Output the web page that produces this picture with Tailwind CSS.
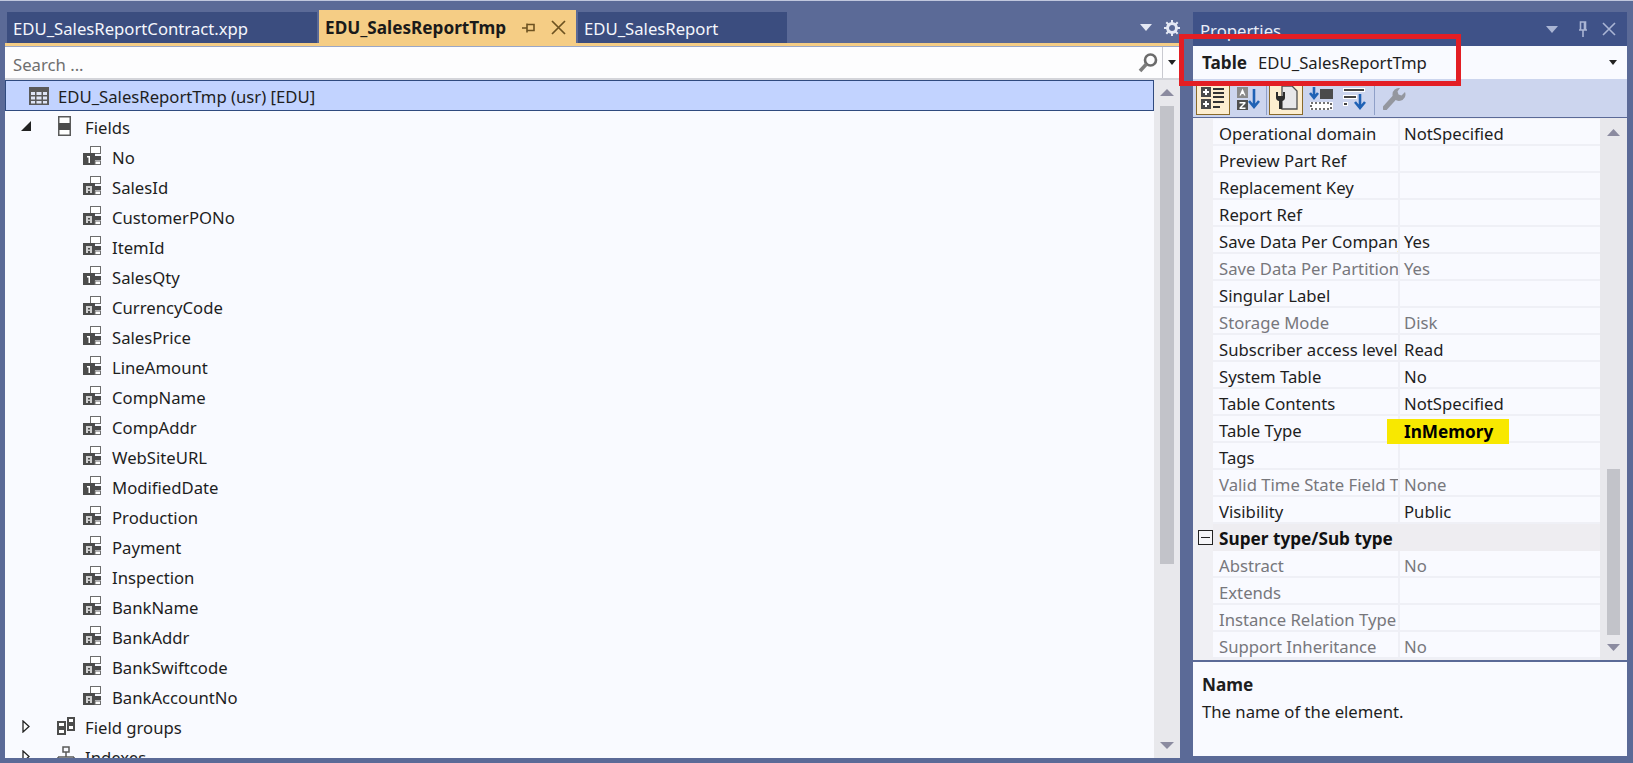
<!DOCTYPE html>
<html lang="en">

<head>
    <meta charset="UTF-8">
    <title>EDU_SalesReportTmp</title>
    <script src="https://cdn.jsdelivr.net/npm/@tailwindcss/browser@4"></script>
</head>

<body class="bg-[#5b6a97] h-[763px] w-[1633px] overflow-hidden relative font-['Noto_Sans',sans-serif] text-[16.7px] text-[#1e1e1e]">
    <svg class="hidden">
        <symbol id="field" viewBox="0 0 18 20">
            <rect x="7.5" y="0.5" width="10" height="7" fill="#fff" stroke="#6d6d6d" />
            <rect x="0" y="7" width="12" height="12" fill="#4c4c4c" />
            <rect x="12" y="10" width="6" height="4" fill="#4c4c4c" />
            <rect x="12" y="15" width="5.5" height="3.5" fill="#fff" stroke="#6d6d6d" />
            <rect x="3" y="10" width="6" height="7" fill="#fff" opacity=".75" />
            <rect x="5" y="12" width="2" height="1.5" fill="#4c4c4c" />
            <rect x="5" y="15" width="2" height="2" fill="#4c4c4c" />
        </symbol>
        <symbol id="fieldnum" viewBox="0 0 18 20">
            <rect x="7.5" y="0.5" width="10" height="7" fill="#fff" stroke="#6d6d6d" />
            <rect x="0" y="7" width="12" height="12" fill="#4c4c4c" />
            <rect x="12" y="10" width="6" height="4" fill="#4c4c4c" />
            <rect x="12" y="15" width="5.5" height="3.5" fill="#fff" stroke="#6d6d6d" />
            <path d="M4 10h3v7H5.5v-5.5H4z" fill="#fff" />
        </symbol>
    </svg>

    <div class="flex h-[758px] pt-[9px] border-t border-[#c0c7dd]">
        <!-- left side: tabs and tree -->
        <div class="w-[1175px] ml-[5px] flex flex-col relative">
            <div class="flex items-end h-[33px] pl-[2px] gap-[2px]">
                <div class="w-[310px] h-[31px] bg-[#3b4d7f] text-[#f4f6fc] pl-[6px] pt-[2px] flex items-center">EDU_SalesReportContract.xpp</div>
                <div class="w-[257px] h-[33px] bg-[#f5cd85] pl-[6px] pt-[2px] flex items-center font-bold text-[17.2px] text-[#1a1a1a]">
                    <span class="w-[197px] whitespace-nowrap">EDU_SalesReportTmp</span>
                    <svg width="14" height="14" viewBox="0 0 14 14" fill="none" stroke="#6d5220" stroke-width="1.6">
                        <path d="M0 7h5M5 2.5v9M5 3.5h7v6H5M12 3v7" />
                    </svg>
                    <svg class="ml-[15px]" width="15" height="15" viewBox="0 0 15 15" fill="none" stroke="#6d5220" stroke-width="1.7">
                        <path d="M1 1l13 13M14 1L1 14" />
                    </svg>
                </div>
                <div class="w-[209px] h-[31px] bg-[#3b4d7f] text-[#f4f6fc] pl-[6px] pt-[2px] flex items-center">EDU_SalesReport</div>
                <div class="flex-1 flex items-center justify-end h-[31px] gap-[12px]">
                    <svg width="12" height="7" viewBox="0 0 12 7"><path d="M0 0h12L6 7z" fill="#e4e8f4" /></svg>
                    <svg width="16" height="16" viewBox="0 0 16 16">
                        <circle cx="8" cy="8" r="4.5" fill="none" stroke="#e4e8f4" stroke-width="3" />
                        <path d="M8 0v3M8 13v3M0 8h3M13 8h3M2.3 2.3l2.2 2.2M11.5 11.5l2.2 2.2M13.7 2.3l-2.2 2.2M4.5 11.5l-2.2 2.2" stroke="#e4e8f4" stroke-width="2" />
                    </svg>
                </div>
            </div>
            <div class="h-[4px] bg-[#f5cd85] border-b border-[#9aa7c8]"></div>
            <div class="h-[33px] bg-[#fdfdfe] border-b-2 border-[#d4d5da] flex items-center">
                <span class="flex-1 pl-[8px] pt-[5px] text-[#6f6f6f]">Search ...</span>
                <svg class="mr-[3px]" width="22" height="22" viewBox="0 0 22 22" fill="none">
                    <circle cx="13.5" cy="8" r="5.5" stroke="#6b6b6b" stroke-width="2.6" />
                    <path d="M9.5 12L3 19" stroke="#7d7d7d" stroke-width="3.6" />
                </svg>
                <div class="w-[18px] h-full border-l border-[#c9cad0] flex items-center justify-center">
                    <svg width="8" height="5" viewBox="0 0 8 5"><path d="M0 0h8L4 5z" fill="#222" /></svg>
                </div>
            </div>
            <div class="flex flex-1 min-h-0 bg-[#f9faff]">
                <div class="flex-1 overflow-hidden">
                    <div class="h-[31px] bg-[#c2d3ff] border border-[#2f4a7f] flex items-center pl-[23px]">
                        <svg width="20" height="18" viewBox="0 0 20 18">
                            <path d="M0 0h20v18H0z" fill="#5a5a5a" />
                            <path d="M2 5h4v3H2zM7.5 5h5v3h-5zM14 5h4v3h-4zM2 9.5h4v3H2zM7.5 9.5h5v3h-5zM14 9.5h4v3h-4zM2 14h4v2.5H2zM7.5 14h5v2.5h-5zM14 14h4v2.5h-4z" fill="#dfe5f5" />
                        </svg>
                        <span class="ml-[9px] pt-[3px]">EDU_SalesReportTmp (usr) [EDU]</span>
                    </div>
                    <div id="tree"></div>
                </div>
                <div class="w-[26px] bg-[#e8e8ec] flex flex-col items-center pt-[9px] pb-[9px]">
                    <svg width="14" height="7" viewBox="0 0 14 7"><path d="M7 0l7 7H0z" fill="#8b8ba0" /></svg>
                    <div class="w-[14px] h-[458px] mt-[10px] bg-[#c2c3c9]"></div>
                    <div class="flex-1"></div>
                    <svg width="14" height="7" viewBox="0 0 14 7"><path d="M0 0h14L7 7z" fill="#8b8ba0" /></svg>
                </div>
            </div>
        </div>

        <!-- properties panel -->
        <div class="w-[434px] ml-[13px] h-[744px] mt-[2px] flex flex-col">
            <div class="h-[34px] shrink-0 bg-[#3f5288] text-[#e9edf8] flex items-center pl-[7px] pr-[11px]">
                <span class="flex-1 pt-[4px]">Properties</span>
                <svg width="12" height="7" viewBox="0 0 12 7"><path d="M0 0h12L6 7z" fill="#aab5d4" /></svg>
                <svg class="ml-[19px]" width="12" height="16" viewBox="0 0 12 16" fill="none" stroke="#aab5d4" stroke-width="1.6">
                    <path d="M2 9h8M3.5 1h5v8h-5zM7.5 1v8M6 9v7" />
                </svg>
                <svg class="ml-[13px]" width="14" height="14" viewBox="0 0 14 14" fill="none" stroke="#aab5d4" stroke-width="1.6">
                    <path d="M1 1l12 12M13 1L1 13" />
                </svg>
            </div>
            <div class="h-[33px] shrink-0 bg-[#f9faff] flex items-center pl-[9px] pr-[10px]">
                <span class="font-bold text-[17.2px]">Table</span>
                <span class="ml-[11px] flex-1">EDU_SalesReportTmp</span>
                <svg width="8" height="5" viewBox="0 0 8 5"><path d="M0 0h8L4 5z" fill="#222" /></svg>
            </div>
            <div class="h-[38px] shrink-0 bg-[#ccd5ee] flex items-center pl-[3px]">
                <div class="w-[34px] h-[33px] bg-[#fdeed0] border border-[#8a6a2a] flex items-center justify-center">
                    <svg width="24" height="24" viewBox="0 0 24 24">
                        <path d="M0 1h10v10H0zM0 13h10v10H0z" fill="#4a4a4a" />
                        <path d="M2 5h6v2H2zM4 3h2v6H4zM2 17h6v2H2zM4 15h2v6H4z" fill="#fff" />
                        <path d="M12 2h11v2H12zM12 6h11v2H12zM12 10h11v2H12zM12 15h11v2H12zM12 20h7v2h-7z" fill="#333" />
                    </svg>
                </div>
                <svg class="ml-[5px]" width="26" height="25" viewBox="0 0 26 25">
                    <path d="M2 1h11v11H2z" fill="#8a8a8a" />
                    <path d="M7.5 2.5l3 7H9l-.5-1.5h-2L6 9.5H4.500z" fill="#fff" />
                    <path d="M2 14h11v10H2z" fill="#4f4f4f" />
                    <path d="M4.500 16h6v1.500l-4 4h4V23h-6v-1.500l4-4h-4z" fill="#fff" />
                    <path d="M19 3v17M14 15l5 6 5-6" fill="none" stroke="#1f62b5" stroke-width="2.600" />
                </svg>
                <div class="w-px h-[34px] bg-[#8fa0c8] ml-[5px]"></div>
                <div class="w-[34px] h-[33px] ml-[2px] bg-[#fdeed0] border border-[#8a6a2a] flex items-center justify-center">
                    <svg width="24" height="26" viewBox="0 0 24 26">
                        <path d="M8 1h10l5 5v18H8z" fill="#e7e7ea" stroke="#4f4f4f" stroke-width="1.300" />
                        <path d="M2 7v6c0 2 2 3 3 3v8h3v-8c1 0 3-1 3-3V7H9v4H4V7z" fill="#2d2d2d" />
                    </svg>
                </div>
                <svg class="ml-[6px]" width="24" height="25" viewBox="0 0 24 25">
                    <path d="M11 3h13v10H11z" fill="#4b4b4b" />
                    <path d="M5 1v10M1 7l4 5 4-5" fill="none" stroke="#1f62b5" stroke-width="2.600" />
                    <path d="M1 16h23v8H1z" fill="#fff" />
                    <path d="M2 17h20v6H2z" fill="none" stroke="#444" stroke-width="1.600" stroke-dasharray="2 2" />
                </svg>
                <svg class="ml-[9px]" width="26" height="25" viewBox="0 0 26 25">
                    <path d="M1 2h22v4H1zM1 9h14v4H1zM1 16h5v4H1z" fill="#fff" />
                    <path d="M2 3h20v2H2zM2 10h12v2H2zM2 17h3v2H2z" fill="#444" />
                    <path d="M18 8v14M13 16l5 6 5-6" fill="none" stroke="#1f62b5" stroke-width="2.600" />
                </svg>
                <div class="w-px h-[34px] bg-[#8fa0c8] ml-[6px]"></div>
                <svg class="ml-[8px]" width="23" height="23" viewBox="0 0 23 23" fill="none">
                    <path d="M2 21L12 10" stroke="#94979f" stroke-width="5" stroke-linecap="round" />
                    <path d="M22 5a6.500 6.500 0 1 1-5-4l-2.500 3.500 1 3 3 1z" fill="#94979f" />
                </svg>
            </div>
            <div class="flex-1 min-h-0 flex mt-[1px] bg-[#f0f0f4]">
                <div class="flex-1 min-w-0 flex flex-col">
                    <div id="grid" class="pt-[1px]"></div>
                </div>
                <div class="w-[27px] bg-[#e8e8ec] flex flex-col items-center pt-[11px] pb-[9px] relative">
                    <svg width="13" height="7" viewBox="0 0 13 7"><path d="M6.500 0L13 7H0z" fill="#8b8ba0" /></svg>
                    <div class="flex-1"></div>
                    <div class="w-[13px] h-[166px] bg-[#c2c3c9] mb-[9px]"></div>
                    <svg width="13" height="7" viewBox="0 0 13 7"><path d="M0 0h13L6.500 7z" fill="#8b8ba0" /></svg>
                </div>
            </div>
            <div class="h-[94px] shrink-0 mt-[2px] bg-[#f9faff] pl-[9px] pt-[9px] leading-[27px]">
                <div class="font-bold text-[17.2px]">Name</div>
                <div>The name of the element.</div>
            </div>
        </div>
    </div>

    <!-- red annotation box on top of the screenshot -->
    <div class="absolute left-[1179px] top-[34px] w-[282px] h-[52px] border-[5px] border-[#e31e24]"></div>

    <script>
        const fields = [
            ["No", "fieldnum"], ["SalesId", "field"], ["CustomerPONo", "field"], ["ItemId", "field"],
            ["SalesQty", "fieldnum"], ["CurrencyCode", "field"], ["SalesPrice", "fieldnum"], ["LineAmount", "fieldnum"],
            ["CompName", "field"], ["CompAddr", "field"], ["WebSiteURL", "field"], ["ModifiedDate", "fieldnum"],
            ["Production", "field"], ["Payment", "field"], ["Inspection", "field"], ["BankName", "field"],
            ["BankAddr", "field"], ["BankSwiftcode", "field"], ["BankAccountNo", "field"]
        ];

        let tree = `
            <div class="h-[30px] flex items-center pl-[16px]">
                <svg width="10" height="10" viewBox="0 0 10 10"><path d="M10 0v10H0z" fill="#222" /></svg>
                <svg class="ml-[27px]" width="13" height="20" viewBox="0 0 13 20">
                    <rect x=".75" y=".75" width="11.500" height="18.500" fill="#fff" stroke="#5a5a5a" stroke-width="1.500" />
                    <rect x="1" y="7" width="11" height="7" fill="#4c4c4c" />
                </svg>
                <span class="ml-[14px] pt-[4px]">Fields</span>
            </div>`;
        for (const [name, icon] of fields) {
            tree += `
            <div class="h-[30px] flex items-center pl-[78px]">
                <svg width="18" height="20"><use href="#${icon}" /></svg>
                <span class="ml-[11px] pt-[4px]">${name}</span>
            </div>`;
        }
        tree += `
            <div class="h-[30px] flex items-center pl-[17px]">
                <svg width="8" height="13" viewBox="0 0 8 13"><path d="M1 1l6 5.500L1 12z" fill="#fff" stroke="#222" stroke-width="1.300" /></svg>
                <svg class="ml-[27px]" width="18" height="20" viewBox="0 0 18 20">
                    <path d="M0 5h9v14H0zM10 1h8v14h-8z" fill="#4c4c4c" />
                    <path d="M2 7h5v3H2zM2 14h5v3H2zM12 3h4v3h-4zM12 10h4v3h-4z" fill="#fff" />
                </svg>
                <span class="ml-[10px] pt-[4px]">Field groups</span>
            </div>
            <div class="h-[30px] flex items-center pl-[17px]">
                <svg width="8" height="13" viewBox="0 0 8 13"><path d="M1 1l6 5.500L1 12z" fill="#fff" stroke="#222" stroke-width="1.300" /></svg>
                <svg class="ml-[27px]" width="18" height="20" viewBox="0 0 18 20" fill="none" stroke="#5a5a5a" stroke-width="1.500">
                    <path d="M6 1h6v5H6zM9 6v5M1 11h16M1 11v3M17 11v3M0 14h5v5H0zM13 14h5v5h-5z" />
                </svg>
                <span class="ml-[10px] pt-[4px]">Indexes</span>
            </div>`;
        document.getElementById("tree").innerHTML = tree;

        // label, value, disabled
        const props = [
            ["Operational domain", "NotSpecified"], ["Preview Part Ref", ""], ["Replacement Key", ""], ["Report Ref", ""],
            ["Save Data Per Company", "Yes"], ["Save Data Per Partition", "Yes", true], ["Singular Label", ""],
            ["Storage Mode", "Disk", true], ["Subscriber access level", "Read"], ["System Table", "No"],
            ["Table Contents", "NotSpecified"], ["Table Type", "InMemory"], ["Tags", ""],
            ["Valid Time State Field Type", "None", true], ["Visibility", "Public"]
        ];
        const props2 = [
            ["Abstract", "No", true], ["Extends", "", true], ["Instance Relation Type", "", true], ["Support Inheritance", "No", true]
        ];

        function propRow([label, value, disabled]) {
            const color = disabled ? "text-[#77777c]" : "";
            const inner = value === "InMemory"
                ? `<span class="absolute left-[-13px] top-[3px] w-[122px] h-[25px] bg-[#f8e800] font-bold text-[17.2px] pl-[17px] flex items-center text-black">InMemory</span>`
                : value;
            return `
            <div class="h-[27px] flex bg-[#f9faff] border-b-2 border-[#eff0f6] ml-[20px] ${color}">
                <div class="w-[187px] pl-[6px] pt-[2px] overflow-hidden whitespace-nowrap border-r-2 border-[#eff0f6] leading-[25px]">${label}</div>
                <div class="flex-1 pl-[4px] pt-[2px] relative leading-[25px]">${inner}</div>
            </div>`;
        }

        document.getElementById("grid").innerHTML = props.map(propRow).join("") + `
            <div class="h-[27px] flex items-center relative">
                <div class="w-[15px] h-[15px] ml-[5px] border border-[#222] flex items-center justify-center bg-[#f5f5f8]">
                    <div class="w-[9px] h-px bg-[#222]"></div>
                </div>
                <div class="flex-1 h-full bg-[#eeedf1] pl-[6px] pt-[2px] font-bold text-[17.2px] text-[#111] leading-[25px]">Super type/Sub type</div>
            </div>` + props2.map(propRow).join("");
    </script>
</body>

</html>
